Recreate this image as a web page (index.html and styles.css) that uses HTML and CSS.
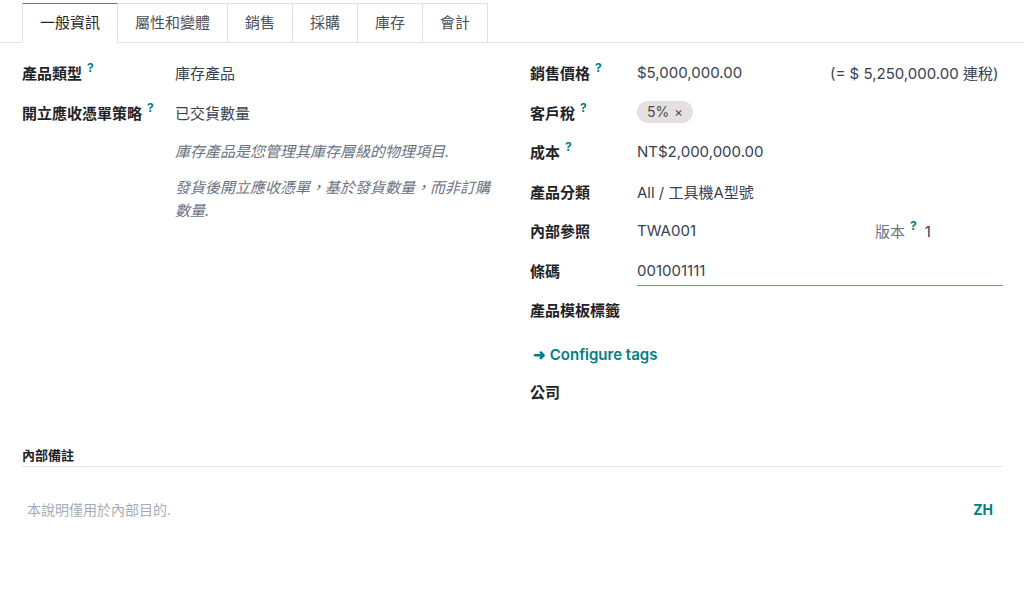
FILE: index.html
```html
<!DOCTYPE html>
<html lang="zh-Hant">
<head>
    <meta charset="UTF-8">
    <meta name="viewport" content="width=device-width, initial-scale=1.0">
    <title>產品</title>
    <link rel="stylesheet" href="styles.css">
</head>
<body>
    <div class="sheet">
        <ul class="tabs">
            <li class="tab active">一般資訊</li>
            <li class="tab">屬性和變體</li>
            <li class="tab">銷售</li>
            <li class="tab">採購</li>
            <li class="tab">庫存</li>
            <li class="tab">會計</li>
        </ul>

        <div class="form">
            <div class="group group-left">
                <div class="row">
                    <div class="label">產品類型<sup class="help">?</sup></div>
                    <div class="value">庫存產品</div>
                </div>
                <div class="row">
                    <div class="label">開立應收憑單策略<sup class="help">?</sup></div>
                    <div class="value">已交貨數量</div>
                </div>
                <div class="hints">
                    <p>庫存產品是您管理其庫存層級的物理項目.</p>
                    <p>發貨後開立應收憑單，基於發貨數量，而非訂購數量.</p>
                </div>
            </div>

            <div class="group group-right">
                <div class="row">
                    <div class="label">銷售價格<sup class="help">?</sup></div>
                    <div class="value split">
                        <span class="price">$5,000,000.00</span>
                        <span>(= $ 5,250,000.00 連稅)</span>
                    </div>
                </div>
                <div class="row">
                    <div class="label">客戶稅<sup class="help">?</sup></div>
                    <div class="value"><span class="tag">5% <span class="tag-x">×</span></span></div>
                </div>
                <div class="row">
                    <div class="label">成本<sup class="help">?</sup></div>
                    <div class="value">NT$2,000,000.00</div>
                </div>
                <div class="row">
                    <div class="label">產品分類</div>
                    <div class="value">All / 工具機A型號</div>
                </div>
                <div class="row">
                    <div class="label">內部參照</div>
                    <div class="value split">
                        <span class="ref">TWA001</span>
                        <span class="version"><span class="muted">版本</span><sup class="help">?</sup><span class="version-no">1</span></span>
                    </div>
                </div>
                <div class="row">
                    <div class="label">條碼</div>
                    <div class="value"><div class="input focused">001001111</div></div>
                </div>
                <div class="row">
                    <div class="label">產品模板標籤</div>
                    <div class="value"></div>
                </div>
                <div class="link-row">
                    <a href="#" class="link">&#10140; Configure tags</a>
                </div>
                <div class="row">
                    <div class="label">公司</div>
                    <div class="value"></div>
                </div>
            </div>
        </div>

        <div class="notes">
            <div class="notes-title">內部備註</div>
            <div class="notes-body">
                <span class="placeholder">本說明僅用於內部目的.</span>
                <span class="lang">ZH</span>
            </div>
        </div>
    </div>
</body>
</html>
```

FILE: styles.css
```css
* {
    margin: 0;
    padding: 0;
    box-sizing: border-box;
}

body {
    font-family: "Inter", "Noto Sans CJK TC", sans-serif;
    font-size: 15px;
    color: #374151;
    background-color: #fff;
}

.sheet {
    width: 1024px;
    height: 591px;
}

/* Tabs */
.tabs {
    list-style: none;
    display: flex;
    padding: 3px 0 0 22px;
    border-bottom: 1px solid #dee2e6;
}

.tab {
    height: 40px;
    line-height: 38px;
    padding: 0 17px;
    border: 1px solid #dee2e6;
    border-left: none;
    margin-bottom: -1px;
    color: #4b5058;
    background-color: #fff;
}

.tab:first-child {
    border-left: 1px solid #dee2e6;
}

.tab.active {
    color: #1f2328;
    border-top: 1px solid #8a6f84;
    border-bottom-color: #fff;
}

/* Form */
.form {
    display: grid;
    grid-template-columns: 478px 473px;
    column-gap: 30px;
    padding: 10px 0 0 22px;
}

.row {
    display: grid;
    min-height: 39.5px;
    align-items: center;
}

.group-left .row {
    grid-template-columns: 153px 1fr;
}

.group-right .row {
    grid-template-columns: 107px 1fr;
}

.label {
    font-weight: 700;
    color: #1f2328;
}

.help {
    color: #017e84;
    font-size: 12px;
    font-weight: 700;
    margin-left: 5px;
    vertical-align: 7px;
    line-height: 0;
}

.value {
    color: #374151;
}

.split {
    display: flex;
    align-items: center;
}

.price {
    width: 193px;
}

.ref {
    width: 238px;
}

.version .muted {
    color: #6b7280;
}

.version-no {
    margin-left: 8px;
}

.tag {
    display: inline-block;
    height: 22px;
    line-height: 22px;
    padding: 0 10px;
    border-radius: 11px;
    background-color: #e6dfe1;
    color: #4b4b4b;
    font-size: 14px;
}

.tag-x {
    font-size: 13px;
    margin-left: 1px;
}

.input {
    width: 100%;
    height: 26px;
    line-height: 22px;
}

.input.focused {
    border-bottom: 1px solid #4fa2a7;
    position: relative;
    top: 3px;
}

.hints {
    margin-left: 153px;
    margin-top: 8px;
    color: #6b7280;
    font-style: italic;
}

.hints p {
    line-height: 23px;
    margin-bottom: 13px;
}

.link-row {
    height: 35px;
    margin-top: 7px;
    display: flex;
    align-items: center;
}

.link {
    color: #017e84;
    font-weight: 600;
    text-decoration: none;
    padding-left: 3px;
}

/* Internal notes */
.notes {
    margin: 35px 21px 0 22px;
}

.notes-title {
    font-size: 13px;
    font-weight: 700;
    color: #1f2328;
    line-height: 18px;
    padding-bottom: 2px;
    border-bottom: 1px solid #e5e7ea;
}

.notes-body {
    display: flex;
    justify-content: space-between;
    align-items: center;
    padding: 32px 10px 0 5px;
    font-size: 14px;
}

.placeholder {
    color: #a7abb0;
}

.lang {
    color: #017e84;
    font-weight: 700;
}
```
